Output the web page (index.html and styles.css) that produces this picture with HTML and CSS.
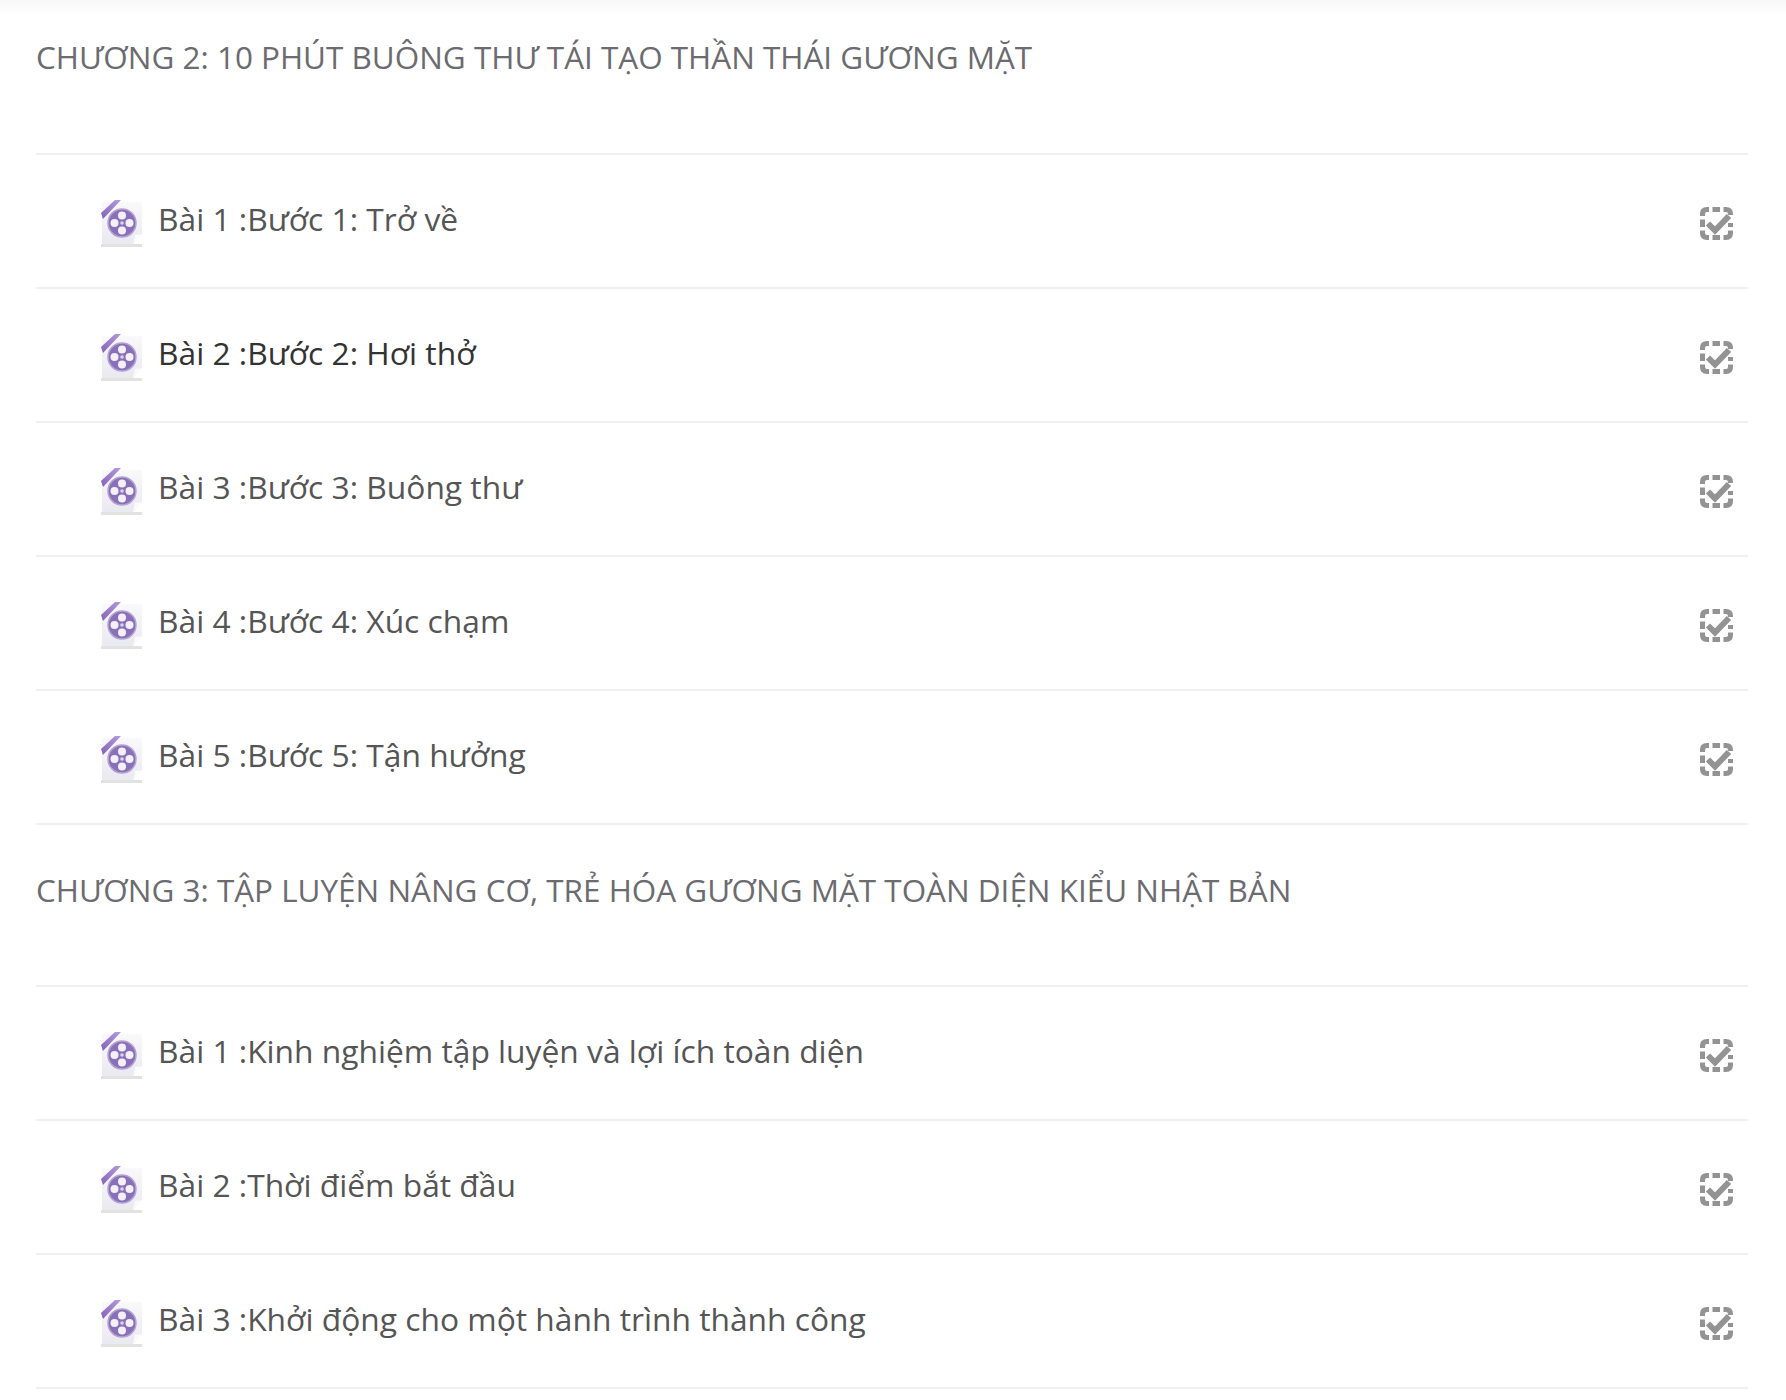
FILE: index.html
```html
<!DOCTYPE html>
<html lang="vi">
<head>
    <meta charset="UTF-8">
    <title>Nội dung khóa học</title>
    <link rel="stylesheet" href="styles.css">
</head>
<body>

    <svg class="defs" width="0" height="0">
        <defs>
            <linearGradient id="page" x1="0" y1="0" x2="0" y2="1">
                <stop offset="0" stop-color="#f9f9fb"/>
                <stop offset="1" stop-color="#e9e9f0"/>
            </linearGradient>
            <linearGradient id="ribbon" x1="0" y1="1" x2="1" y2="0">
                <stop offset="0" stop-color="#8561b8"/>
                <stop offset="1" stop-color="#b49ade"/>
            </linearGradient>
        </defs>
        <symbol id="film" viewBox="0 0 44 50">
            <path d="M2 3 H42 V35 L33 45 H2 Z" fill="url(#page)"/>
            <path d="M33 45 L35 36 L42 35 Z" fill="#fbfbfd"/>
            <path d="M1 45 H33 L42 45 V48 H1 Z" fill="#e2e2e0"/>
            <path d="M15 1 H21 L3 20 L1 14 Z" fill="url(#ribbon)"/>
            <circle cx="22" cy="24" r="14" fill="#8a70b8"/>
            <circle cx="22" cy="24" r="14" fill="none" stroke="#b3a2d2" stroke-width="1.5"/>
            <circle cx="22" cy="24" r="1.8" fill="#dcd3ec"/>
            <circle cx="22" cy="16.5" r="4" fill="#f3f0f9"/>
            <circle cx="22" cy="31.5" r="4" fill="#f3f0f9"/>
            <circle cx="14.5" cy="24" r="4" fill="#f3f0f9"/>
            <circle cx="29.5" cy="24" r="4" fill="#f3f0f9"/>
        </symbol>
        <symbol id="check" viewBox="0 0 33 33">
            <path d="M2.5 9 V7 Q2.5 2.5 7 2.5 H9 M12.5 2.5 H20 M23.5 2.5 H26 Q30.5 2.5 30.5 7 V8 M30.5 16 V20 M30.5 23.5 V26 Q30.5 30.5 26 30.5 H23.5 M20 30.5 H12.5 M9 30.5 H7 Q2.5 30.5 2.5 26 V23.5 M2.5 20 V12.5" fill="none" stroke="#939393" stroke-width="5"/>
            <path d="M8 16.5 L15 23.5 L29 9" fill="none" stroke="#939393" stroke-width="6"/>
        </symbol>
    </svg>

    <div class="course">

        <div class="chapter first">CHƯƠNG 2: 10 PHÚT BUÔNG THƯ TÁI TẠO THẦN THÁI GƯƠNG MẶT</div>
        <div class="lesson">
            <svg class="film"><use href="#film"/></svg>
            <span class="title">Bài 1 :Bước 1: Trở về</span>
            <svg class="check"><use href="#check"/></svg>
        </div>
        <div class="lesson">
            <svg class="film"><use href="#film"/></svg>
            <span class="title active">Bài 2 :Bước 2: Hơi thở</span>
            <svg class="check"><use href="#check"/></svg>
        </div>
        <div class="lesson">
            <svg class="film"><use href="#film"/></svg>
            <span class="title">Bài 3 :Bước 3: Buông thư</span>
            <svg class="check"><use href="#check"/></svg>
        </div>
        <div class="lesson">
            <svg class="film"><use href="#film"/></svg>
            <span class="title">Bài 4 :Bước 4: Xúc chạm</span>
            <svg class="check"><use href="#check"/></svg>
        </div>
        <div class="lesson">
            <svg class="film"><use href="#film"/></svg>
            <span class="title">Bài 5 :Bước 5: Tận hưởng</span>
            <svg class="check"><use href="#check"/></svg>
        </div>

        <div class="chapter">CHƯƠNG 3: TẬP LUYỆN NÂNG CƠ, TRẺ HÓA GƯƠNG MẶT TOÀN DIỆN KIỂU NHẬT BẢN</div>
        <div class="lesson">
            <svg class="film"><use href="#film"/></svg>
            <span class="title">Bài 1 :Kinh nghiệm tập luyện và lợi ích toàn diện</span>
            <svg class="check"><use href="#check"/></svg>
        </div>
        <div class="lesson">
            <svg class="film"><use href="#film"/></svg>
            <span class="title">Bài 2 :Thời điểm bắt đầu</span>
            <svg class="check"><use href="#check"/></svg>
        </div>
        <div class="lesson">
            <svg class="film"><use href="#film"/></svg>
            <span class="title">Bài 3 :Khởi động cho một hành trình thành công</span>
            <svg class="check"><use href="#check"/></svg>
        </div>

    </div>

</body>
</html>
```

FILE: styles.css
```css
body {
    margin: 0;
    height: 1400px;
    overflow: hidden;
    background: linear-gradient(to bottom, #f7f7f7, #ffffff 14px);
    font-family: "Open Sans", sans-serif;
}

.defs {
    display: block;
}

.course {
    padding: 0 38px 0 36px;
}

.chapter {
    height: 162px;
    padding-top: 45px;
    box-sizing: border-box;
    border-bottom: 2px solid #f0f0f0;
    font-size: 31.45px;
    line-height: 40px;
    color: #6b6b70;
}

.chapter.first {
    height: 155px;
    padding-top: 37px;
}

.lesson {
    display: flex;
    align-items: center;
    height: 134px;
    box-sizing: border-box;
    border-bottom: 2px solid #f0f0f0;
    padding-left: 64px;
    padding-right: 15px;
}

.film {
    width: 44px;
    height: 50px;
    margin-top: 6px;
    filter: blur(0.6px);
}

.title {
    margin-left: 14px;
    margin-top: -5px;
    font-size: 31.75px;
    color: #555555;
}

.title.active {
    color: #333333;
}

.check {
    width: 33px;
    height: 33px;
    margin-left: auto;
    margin-top: 4px;
    filter: blur(0.5px);
}
```
